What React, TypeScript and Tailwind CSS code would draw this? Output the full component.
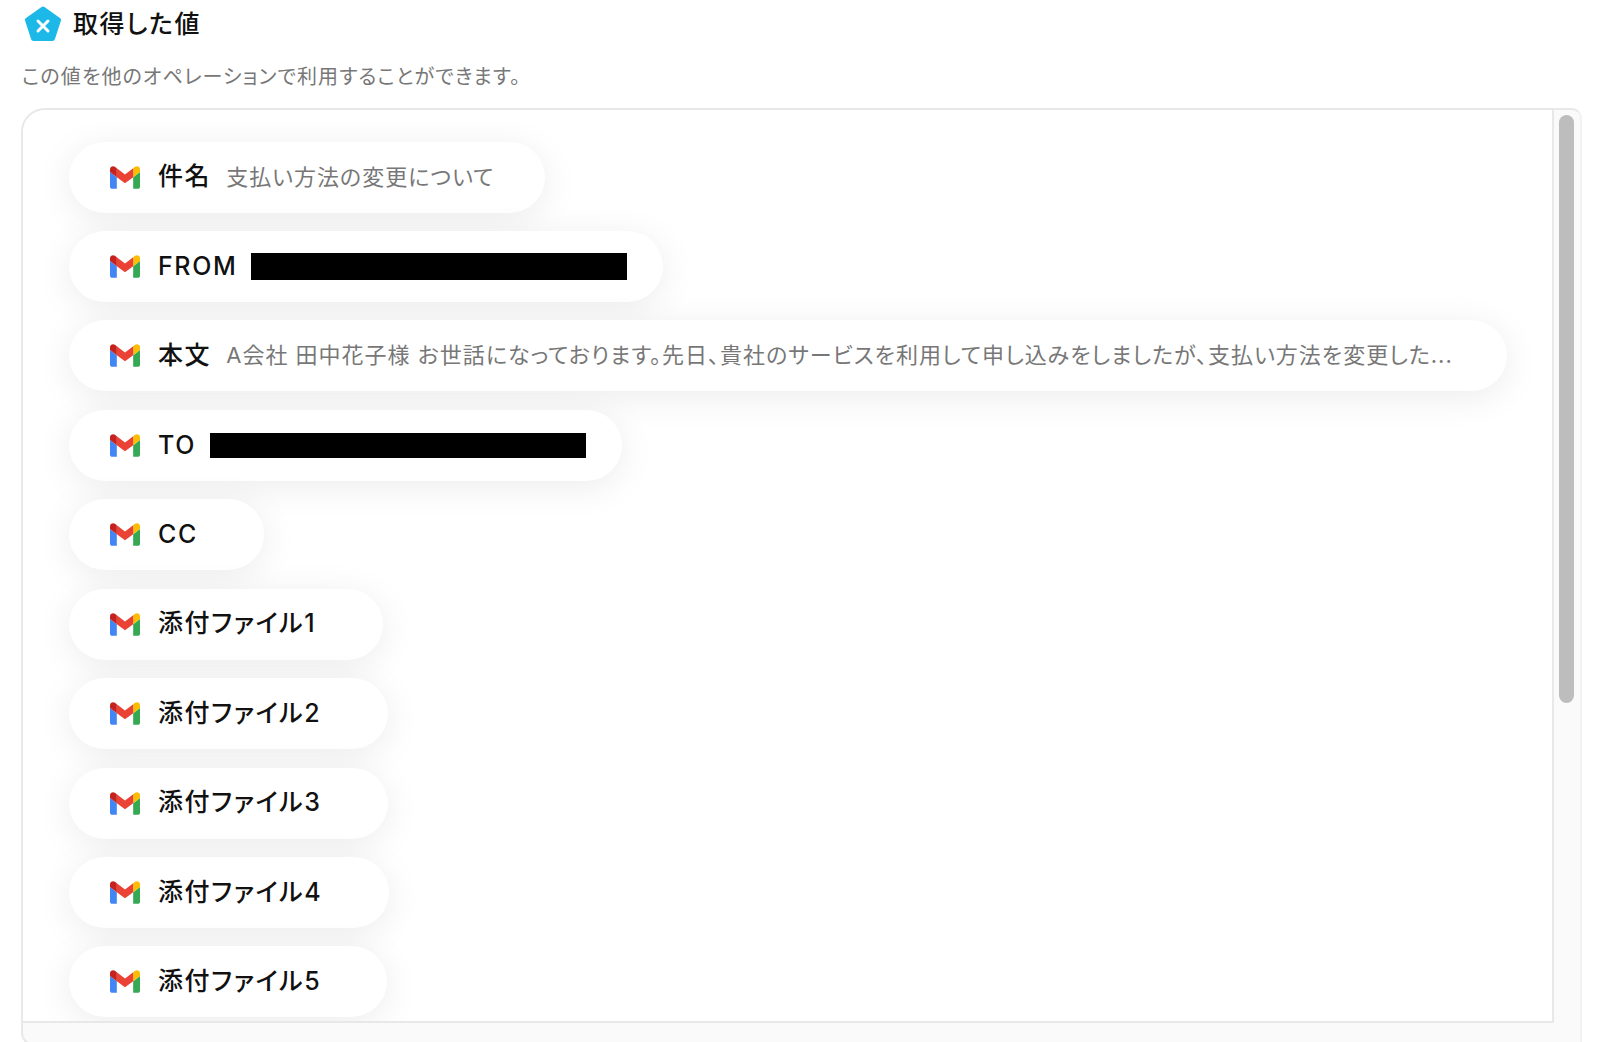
import React from 'react';

const GmailIcon: React.FC = () => (
  <svg viewBox="52 42 88 66" className="w-[30px] h-[23px] shrink-0">
    <path fill="#4285f4" d="M58 108h14V74L52 59v43c0 3.32 2.69 6 6 6" />
    <path fill="#34a853" d="M120 108h14c3.32 0 6-2.69 6-6V59l-20 15" />
    <path fill="#fbbc04" d="M120 48v26l20-15v-8c0-7.42-8.47-11.65-14.4-7.2" />
    <path fill="#ea4335" d="M72 74V48l24 18 24-18v26L96 92" />
    <path fill="#c5221f" d="M52 51v8l20 15V48l-5.6-4.2c-5.94-4.45-14.4-.22-14.4 7.2" />
  </svg>
);

const ValueIcon: React.FC = () => (
  <svg viewBox="0 0 38 36" className="w-[38px] h-[36px] shrink-0">
    <path
      d="M19 3 L34.5 14 L28.5 32.5 L9.5 32.5 L3.5 14 Z"
      fill="#1cb8e8"
      stroke="#1cb8e8"
      strokeWidth="5"
      strokeLinejoin="round"
    />
    <path d="M14 15 L24 25 M24 15 L14 25" stroke="#fff" strokeWidth="3" strokeLinecap="round" />
  </svg>
);

type Item = { label: string; width: string; value?: string; redact?: string };

const items: Item[] = [
  { label: '件名', width: 'w-[476px]', value: '支払い方法の変更について' },
  { label: 'FROM', width: 'w-[594px]', redact: 'h-[27px]' },
  {
    label: '本文',
    width: 'w-[1438px]',
    value: 'A会社 田中花子様 お世話になっております。先日、貴社のサービスを利用して申し込みをしましたが、支払い方法を変更した...',
  },
  { label: 'TO', width: 'w-[553px]', redact: 'h-[25px]' },
  { label: 'CC', width: 'w-[195px]' },
  { label: '添付ファイル1', width: 'w-[314px]' },
  { label: '添付ファイル2', width: 'w-[319px]' },
  { label: '添付ファイル3', width: 'w-[319px]' },
  { label: '添付ファイル4', width: 'w-[320px]' },
  { label: '添付ファイル5', width: 'w-[318px]' },
];

export default function App() {
  return (
    <div className="h-[1042px] overflow-hidden bg-white font-['Inter','Noto_Sans_CJK_JP',sans-serif] [font-feature-settings:'palt']">
      {/* Header */}
      <div className="flex items-center gap-[11px] pl-[24px] pt-[6px] h-[42px]">
        <ValueIcon />
        <h1 className="text-[25px] leading-[36px] tracking-[1.6px] font-medium text-[#111]">取得した値</h1>
      </div>
      <p className="pl-[22px] mt-[21px] text-[20px] leading-[28px] tracking-[1.1px] text-[#777]">この値を他のオペレーションで利用することができます。</p>

      {/* Values box */}
      <div className="ml-[21px] mt-[17px] w-[1561px] h-[937px] flex flex-col border-2 border-[#e8e8e8] border-r-[#f2f2f2] rounded-tl-[24px] rounded-tr-[10px] rounded-bl-[12px] overflow-hidden bg-[#fafafa]">
        <div className="flex h-[913px] shrink-0">
          <div className="flex-1 flex flex-col gap-[18.44px] pl-[46px] pt-[31.5px] bg-white border-r-2 border-b-2 border-[#e8e8e8] overflow-hidden">
            {items.map((item) => (
              <div
                key={item.label}
                className={`${item.width} h-[71px] shrink-0 flex items-center pl-[41px] rounded-full bg-white shadow-[0_6px_36px_rgba(0,0,0,0.08)]`}
              >
                <GmailIcon />
                <span className="ml-[18px] text-[25px] tracking-[1.6px] font-medium text-[#111] whitespace-nowrap">{item.label}</span>
                {item.value && (
                  <span className="ml-[15px] text-[22px] tracking-[1px] text-[#777] whitespace-nowrap">{item.value}</span>
                )}
                {item.redact && <span className={`ml-[14px] w-[376px] ${item.redact} bg-black`} />}
              </div>
            ))}
          </div>
          {/* Scrollbar */}
          <div className="w-[26px] shrink-0 pl-[5px] pt-[5px]">
            <div className="w-[15px] h-[588px] rounded-full bg-[#bdbdbd]" />
          </div>
        </div>
      </div>
    </div>
  );
}
